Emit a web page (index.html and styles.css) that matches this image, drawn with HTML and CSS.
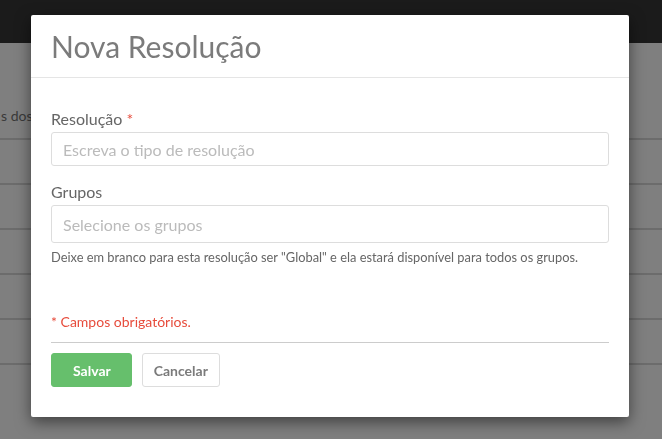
FILE: index.html
```html
<!DOCTYPE html>
<html lang="pt-BR">
<head>
    <meta charset="UTF-8">
    <meta name="viewport" content="width=device-width, initial-scale=1.0">
    <title>Nova Resolução</title>
    <link rel="stylesheet" href="styles.css">
</head>
<body>

    <div class="navbar"></div>

    <div class="page">
        <p class="page-intro">s dos</p>
        <div class="list">
            <div class="list-row"></div>
            <div class="list-row"></div>
            <div class="list-row"></div>
            <div class="list-row"></div>
            <div class="list-row"></div>
        </div>
    </div>

    <div class="modal-backdrop"></div>

    <div class="modal">
        <div class="modal-header">
            <h4 class="modal-title">Nova Resolução</h4>
        </div>
        <div class="modal-body">
            <div class="form-group">
                <label for="resolucao">Resolução <span class="required">*</span></label>
                <input type="text" id="resolucao" class="form-control" placeholder="Escreva o tipo de resolução">
            </div>
            <div class="form-group">
                <label for="grupos">Grupos</label>
                <input type="text" id="grupos" class="form-control select-like" placeholder="Selecione os grupos">
                <p class="help-block">Deixe em branco para esta resolução ser "Global" e ela estará disponível para todos os grupos.</p>
            </div>

            <p class="required-note">* Campos obrigatórios.</p>

            <div class="form-actions">
                <button type="button" class="btn btn-success">Salvar</button>
                <button type="button" class="btn btn-default">Cancelar</button>
            </div>
        </div>
    </div>

</body>
</html>
```

FILE: styles.css
```css
body {
    margin: 0;
    font-family: Lato, "Open Sans", sans-serif;
    background-color: #ffffff;
    color: #555555;
    overflow: hidden;
}

.navbar {
    height: 43px;
    background-color: #363636;
}

/* Conteudo da pagina atras do modal */
.page {
    padding-top: 63px;
}

.page-intro {
    margin: 0;
    padding-left: 1px;
    font-size: 14px;
    line-height: 20px;
    color: #757575;
    white-space: nowrap;
}

.list {
    margin-top: 12px;
    border-top: 2px solid #d9d9d9;
}

.list-row {
    height: 43px;
    border-bottom: 2px solid #d9d9d9;
}

.modal-backdrop {
    position: fixed;
    top: 0;
    left: 0;
    right: 0;
    bottom: 0;
    background-color: rgba(0, 0, 0, 0.5);
}

.modal {
    position: absolute;
    top: 15px;
    left: 31px;
    width: 598px;
    background-color: #ffffff;
    border-radius: 2px;
    box-shadow: 0 5px 15px rgba(0, 0, 0, 0.5);
}

.modal-header {
    padding: 16px 20px 15px;
    border-bottom: 1px solid #e5e5e5;
}

.modal-title {
    margin: 0;
    font-size: 30px;
    line-height: 31px;
    font-weight: normal;
    color: #7b7b7b;
}

.modal-body {
    padding: 31px 20px 30px;
}

.form-group {
    margin-bottom: 16px;
}

.form-group label {
    display: block;
    margin-bottom: 3px;
    font-size: 16px;
    line-height: 20px;
    color: #666666;
}

.required {
    color: #e74c3c;
}

.form-control {
    display: block;
    box-sizing: border-box;
    width: 100%;
    height: 34px;
    margin: 0;
    padding: 6px 11px;
    font-family: inherit;
    font-size: 16px;
    color: #555555;
    background-color: #ffffff;
    border: 1px solid #dddddd;
    border-radius: 3px;
    outline: none;
}

.form-control::placeholder {
    color: #bbbbbb;
}

.select-like {
    height: 38px;
}

.help-block {
    margin: 5px 0 0;
    font-size: 12.85px;
    line-height: 18px;
    color: #666666;
}

.required-note {
    margin: 46px 0 0;
    font-size: 14px;
    line-height: 20px;
    color: #e74c3c;
}

.form-actions {
    margin-top: 10px;
    padding-top: 10px;
    border-top: 1px solid #cccccc;
    display: flex;
    gap: 10px;
}

.btn {
    height: 34px;
    font-family: inherit;
    font-size: 14px;
    font-weight: bold;
    border-radius: 3px;
    cursor: pointer;
}

.btn-success {
    padding: 0 20px 0 21px;
    background-color: #66bf6c;
    border: 1px solid #66bf6c;
    color: #ffffff;
}

.btn-default {
    padding: 0 11px;
    background-color: #ffffff;
    border: 1px solid #dddddd;
    color: #7b7b7b;
}
```
